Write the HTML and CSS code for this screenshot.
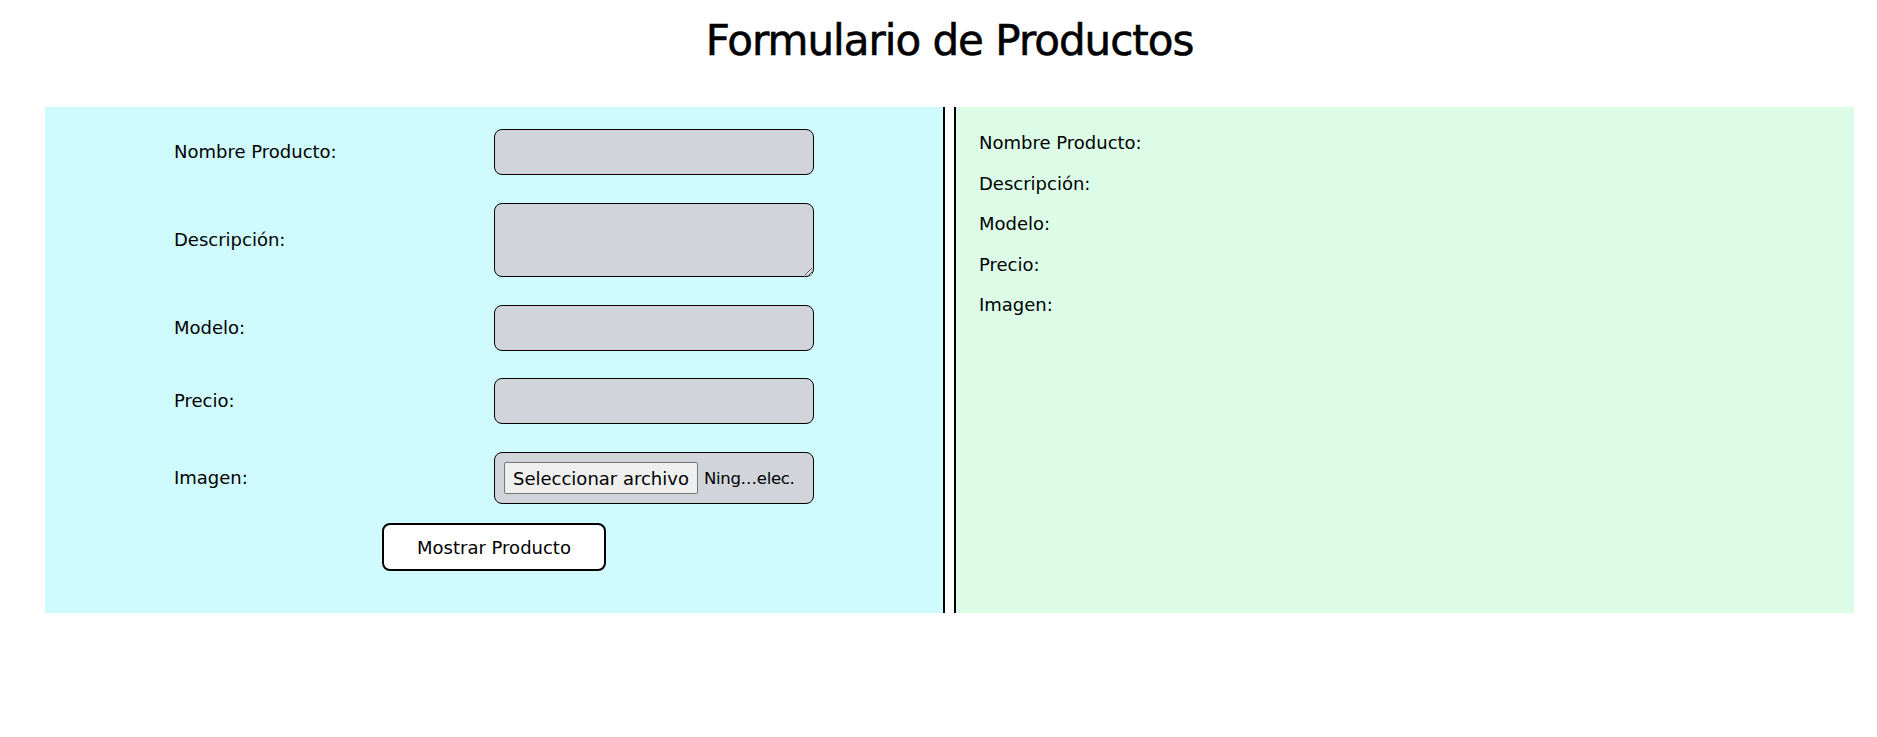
FILE: index.html
```html
<!DOCTYPE html>
<html lang="es">
<head>
<meta charset="utf-8">
<title>Formulario de Productos</title>
<link rel="stylesheet" href="styles.css">
</head>
<body>
<div class="page">
  <h1 class="title">Formulario de Productos</h1>
  <main class="panels">
    <section class="panel panel-form">
      <form class="product-form">
        <div class="fields">
          <label class="field-label" for="nombre">Nombre Producto:</label>
          <input class="field-input" id="nombre" type="text">

          <label class="field-label" for="descripcion">Descripción:</label>
          <textarea class="field-input field-textarea" id="descripcion"></textarea>

          <label class="field-label" for="modelo">Modelo:</label>
          <input class="field-input" id="modelo" type="text">

          <label class="field-label" for="precio">Precio:</label>
          <input class="field-input" id="precio" type="text">

          <label class="field-label" for="imagen">Imagen:</label>
          <label class="file-picker" for="imagen">
            <input class="file-native" id="imagen" type="file">
            <span class="file-btn">Seleccionar archivo</span>
            <span class="file-name">Ning…elec.</span>
          </label>
        </div>
        <button type="button" class="submit-btn">Mostrar Producto</button>
      </form>
    </section>
    <section class="panel panel-preview">
      <p class="preview-line">Nombre Producto:</p>
      <p class="preview-line">Descripción:</p>
      <p class="preview-line">Modelo:</p>
      <p class="preview-line">Precio:</p>
      <p class="preview-line">Imagen:</p>
    </section>
  </main>
</div>
</body>
</html>
```

FILE: styles.css
```css
html, body {
  margin: 0;
  padding: 0;
  background: #ffffff;
}

body {
  font-family: "DejaVu Sans", "Noto Sans", sans-serif;
  color: #000000;
}

.page {
  width: 1809px;
  margin-left: 45px;
}

.title {
  margin: 17px 0 42px;
  font-size: 42px;
  line-height: 48px;
  font-weight: 400;
  letter-spacing: -1px;
  text-align: center;
  -webkit-text-stroke: 0.6px #000000;
}

.panels {
  display: flex;
  gap: 9px;
}

.panel {
  width: 900px;
  box-sizing: border-box;
}

.panel-form {
  background: #cffafe;
  border-right: 2px solid #000000;
  padding: 22px 0 42px;
}

.panel-preview {
  background: #dcfce7;
  border-left: 2px solid #000000;
  padding: 24px 23px;
  display: flex;
  flex-direction: column;
  gap: 16.5px;
}

.preview-line {
  margin: 0;
  font-size: 18px;
  line-height: 24px;
}

.product-form {
  display: flex;
  flex-direction: column;
  align-items: center;
}

.fields {
  display: grid;
  grid-template-columns: 320px 320px;
  row-gap: 27.8px;
  align-items: center;
}

.field-label {
  font-size: 18px;
  line-height: 24px;
}

.field-input {
  box-sizing: border-box;
  display: block;
  width: 100%;
  height: 46px;
  margin: 0;
  padding: 0 12px;
  background: #d1d5db;
  border: 1px solid #000000;
  border-radius: 8px;
  font: inherit;
  font-size: 18px;
  color: #000000;
}

.field-textarea {
  height: 74px;
  padding: 10px 12px;
}

.file-picker {
  box-sizing: border-box;
  display: flex;
  align-items: center;
  height: 52px;
  padding: 0 9px;
  background: #d1d5db;
  border: 1px solid #000000;
  border-radius: 8px;
  overflow: hidden;
  cursor: pointer;
}

.file-native {
  display: none;
}

.file-btn {
  box-sizing: border-box;
  display: flex;
  align-items: center;
  height: 32px;
  padding: 0 8px;
  background: #efefef;
  border: 1px solid #767676;
  border-radius: 2px;
  font-size: 18px;
  color: #000000;
  white-space: nowrap;
}

.file-name {
  margin-left: 6px;
  font-size: 16.5px;
  letter-spacing: -0.3px;
  white-space: nowrap;
}

.submit-btn {
  margin-top: 19px;
  width: 224px;
  height: 48px;
  background: #ffffff;
  border: 2px solid #000000;
  border-radius: 8px;
  font: inherit;
  font-size: 18px;
  color: #000000;
  cursor: pointer;
}
```
